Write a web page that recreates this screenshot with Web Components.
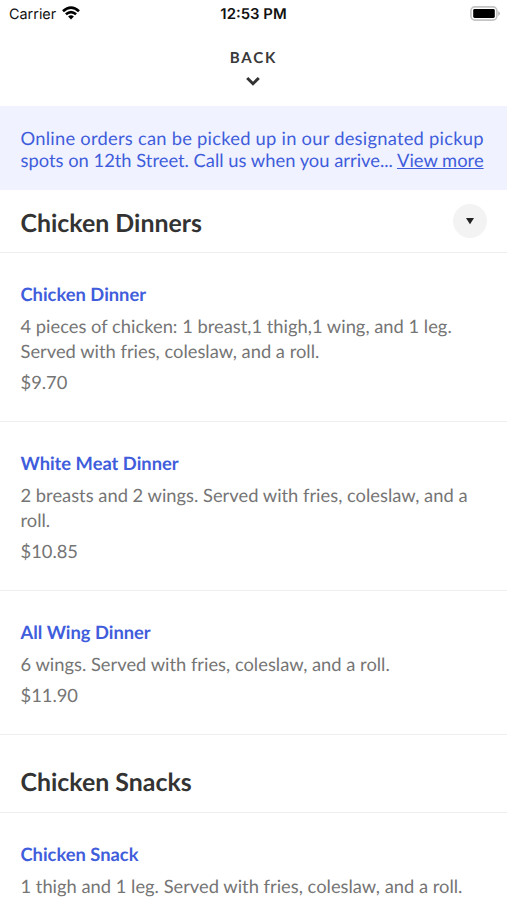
<!DOCTYPE html>
<html lang="en"><head><meta charset="utf-8"><title>Menu</title>
<style>html,body{margin:0;background:#fff}body{width:507px;height:900px;overflow:hidden;font-family:Lato,"Liberation Sans",sans-serif;text-rendering:geometricPrecision}</style></head><body>
<menu-app></menu-app>
<script>
const define = (name, html) => customElements.define(name, class extends HTMLElement {
  constructor() { super(); this.attachShadow({mode:'open'}).innerHTML = html; }
});
define('status-bar', `<style>
:host{display:grid;grid-template-columns:1fr auto 1fr;align-items:center;height:27px;padding:0 6px 0 9px;box-sizing:border-box;font:14.4px Inter,sans-serif;color:#111}
.l{display:flex;align-items:center;gap:6px}.l span{padding-top:1px}.l svg{margin-top:-1px}b{font-weight:600;font-size:14.9px;margin-left:-3px}.r{justify-self:end;display:flex}svg{display:block}
</style><div class="l"><span>Carrier</span><svg width="18" height="14" viewBox="0 0 18 14" fill="none" stroke="#000" stroke-width="2.7"><path d="M1 5.2Q9-2 17 5.2M3.9 8.3q5.1-4.4 10.2 0"/><path d="M9 13.4 6.1 10.5q2.9-2.4 5.8 0Z" fill="#000" stroke="none"/></svg></div>
<b>12:53 PM</b><div class="r"><svg width="31" height="15" viewBox="0 0 31 15"><rect x=".9" y=".9" width="26" height="13.2" rx="4" fill="none" stroke="#c4c4c4" stroke-width="1.6"/><rect x="3.2" y="3" width="21.6" height="9" rx="1.4"/><path d="M28.2 5q3.6 2.5 0 5Z" fill="#bbb"/></svg></div>`);
define('back-header', `<style>
:host{display:flex;flex-direction:column;align-items:center;height:79px;box-sizing:border-box;padding-top:21px;color:#3a3a3a}
span{font-size:15.1px;line-height:20px;font-weight:700;letter-spacing:1.8px}svg{margin:8px 1px 0 0}
</style><span>BACK</span><svg width="14" height="10" viewBox="0 0 14 10" fill="none" stroke="#333" stroke-width="3"><path d="M1.2 2 7 7.7l5.8-5.7"/></svg>`);
define('pickup-notice', `<style>
:host{display:block;height:84px;box-sizing:border-box;padding:21px 20px 0 20.5px;background:#f0f2ff;color:#3f5ddb;font-size:18.35px;line-height:22px}
div{white-space:nowrap}.first{letter-spacing:.24px}a{text-decoration:underline}
</style><div class="first"><slot name="first"></slot></div><div><slot name="second"></slot> <a><slot name="link"></slot></a></div>`);
define('section-title', `<style>
:host{display:flex;align-items:center;justify-content:space-between;height:63px;box-sizing:border-box;padding:3px 20px 0 20.5px;border-bottom:1px solid #eee;color:#333}
h2{margin:0;font-size:24.9px;line-height:30px;font-weight:700}
</style><h2><slot></slot></h2><slot name="action"></slot>`);
define('section-toggle', `<style>
:host{display:flex;width:34px;height:34px;border-radius:50%;background:#f3f3f3;align-items:center;justify-content:center;margin-top:-3px}
</style><svg width="10" height="8" viewBox="0 0 10 8"><path d="M1 1h8L5 7.2Z" fill="#222"/></svg>`);
define('menu-item', `<style>
:host{display:block;box-sizing:border-box;padding:29px 20.5px 26px;border-bottom:1px solid #eee;color:#757575;font-size:18.33px;line-height:24.5px;white-space:nowrap}
h3{margin:0;color:#405ddc;font-size:18.33px;line-height:24px;font-weight:700}
p{margin:8px 0 0}p+p{margin-top:6.5px}
</style><h3><slot name="name"></slot></h3><p><slot></slot></p><p><slot name="price"></slot></p>`);
define('menu-app', `<style>
:host{display:block}.one{height:169px}.short{height:144px}.second{height:78px;padding-top:17px}
</style><status-bar></status-bar><back-header></back-header>
<pickup-notice><span slot="first">Online orders can be picked up in our designated pickup</span><span slot="second">spots on 12th Street. Call us when you arrive...</span><span slot="link">View more</span></pickup-notice>
<section-title>Chicken Dinners<section-toggle slot="action"></section-toggle></section-title>
<menu-item class="one"><span slot="name">Chicken Dinner</span>4 pieces of chicken: 1 breast,1 thigh,1 wing, and 1 leg.<br>Served with fries, coleslaw, and a roll.<span slot="price">$9.70</span></menu-item>
<menu-item class="one"><span slot="name">White Meat Dinner</span>2 breasts and 2 wings. Served with fries, coleslaw, and a<br>roll.<span slot="price">$10.85</span></menu-item>
<menu-item class="short"><span slot="name">All Wing Dinner</span>6 wings. Served with fries, coleslaw, and a roll.<span slot="price">$11.90</span></menu-item>
<section-title class="second">Chicken Snacks</section-title>
<menu-item><span slot="name">Chicken Snack</span>1 thigh and 1 leg. Served with fries, coleslaw, and a roll.</menu-item>`);
</script></body></html>
